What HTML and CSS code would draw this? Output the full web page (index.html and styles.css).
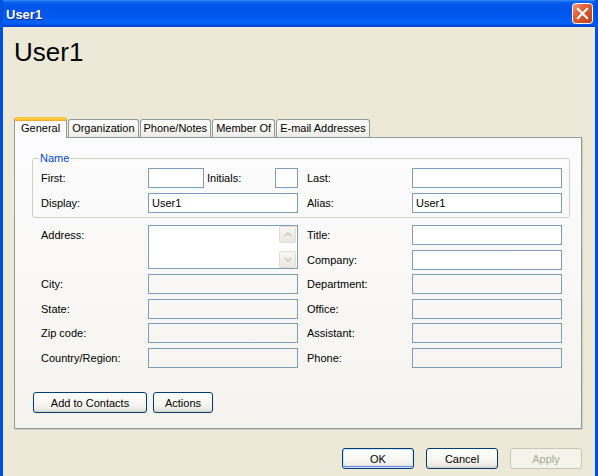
FILE: index.html
```html
<!DOCTYPE html>
<html lang="en">
<head>
    <meta charset="UTF-8">
    <meta name="viewport" content="width=device-width, initial-scale=1.0">
    <title>User1</title>
    <link rel="stylesheet" href="styles.css">
</head>
<body>
    <div class="window">
        <div class="titlebar">
            <span class="caption">User1</span>
            <button class="close" title="Close">
                <svg width="21" height="21" viewBox="0 0 21 21">
                    <defs>
                        <linearGradient id="red" x1="0" y1="0" x2="1" y2="1">
                            <stop offset="0" stop-color="#f0a080"/>
                            <stop offset="0.35" stop-color="#e2643c"/>
                            <stop offset="1" stop-color="#c23a12"/>
                        </linearGradient>
                    </defs>
                    <rect x="0.5" y="0.5" width="20" height="20" rx="3" fill="url(#red)" stroke="#fff"/>
                    <path d="M6 6 L15 15 M15 6 L6 15" stroke="#fff" stroke-width="2.2" stroke-linecap="square"/>
                </svg>
            </button>
        </div>

        <div class="client">
            <h1>User1</h1>

            <div class="tabs">
                <div class="tab active">General</div>
                <div class="tab">Organization</div>
                <div class="tab">Phone/Notes</div>
                <div class="tab">Member Of</div>
                <div class="tab">E-mail Addresses</div>
            </div>

            <div class="panel">
                <fieldset class="group">
                    <legend>Name</legend>
                    <div class="form-grid name-grid">
                        <label>First:</label>
                        <div class="first-cell">
                            <div class="textbox white short"></div>
                            <label class="inline">Initials:</label>
                            <div class="textbox white tiny"></div>
                        </div>
                        <label>Last:</label>
                        <div class="textbox white"></div>

                        <label>Display:</label>
                        <div class="textbox white">User1</div>
                        <label>Alias:</label>
                        <div class="textbox white">User1</div>
                    </div>
                </fieldset>

                <div class="form-grid details">
                    <label class="top">Address:</label>
                    <div class="textbox white multi">
                        <div class="vscroll">
                            <span class="arrow">
                                <svg width="8" height="5" viewBox="0 0 8 5"><path d="M0.5 4.5 L4 1 L7.5 4.5" fill="none" stroke="#c9c7ba" stroke-width="1.4"/></svg>
                            </span>
                            <span class="arrow">
                                <svg width="8" height="5" viewBox="0 0 8 5"><path d="M0.5 0.5 L4 4 L7.5 0.5" fill="none" stroke="#c9c7ba" stroke-width="1.4"/></svg>
                            </span>
                        </div>
                    </div>
                    <label>Title:</label>
                    <div class="textbox white"></div>
                    <label class="right-col">Company:</label>
                    <div class="textbox white"></div>

                    <label>City:</label>
                    <div class="textbox"></div>
                    <label>Department:</label>
                    <div class="textbox"></div>

                    <label>State:</label>
                    <div class="textbox"></div>
                    <label>Office:</label>
                    <div class="textbox"></div>

                    <label>Zip code:</label>
                    <div class="textbox"></div>
                    <label>Assistant:</label>
                    <div class="textbox"></div>

                    <label>Country/Region:</label>
                    <div class="textbox"></div>
                    <label>Phone:</label>
                    <div class="textbox"></div>
                </div>

                <div class="panel-buttons">
                    <button class="btn wide">Add to Contacts</button>
                    <button class="btn narrow">Actions</button>
                </div>
            </div>

            <div class="footer">
                <button class="btn dialog default">OK</button>
                <button class="btn dialog">Cancel</button>
                <button class="btn dialog" disabled>Apply</button>
            </div>
        </div>
    </div>
</body>
</html>
```

FILE: styles.css
```css
* {
    box-sizing: border-box;
}
body {
    margin: 0;
    font-family: "Liberation Sans", Arial, sans-serif;
    font-size: 11px;
    color: #000;
    background-color: #ece9d8;
}
.window {
    width: 598px;
    height: 476px;
    overflow: hidden;
    border-left: 3px solid #0050e0;
    border-right: 3px solid #0050e0;
    background-color: #ece9d8;
}
.titlebar {
    height: 27px;
    margin: 0 -3px;
    padding: 0 5px 0 6px;
    display: flex;
    align-items: center;
    justify-content: space-between;
    background: linear-gradient(to bottom, #3d8ff8 0, #0b60ec 2px, #0055ea 6px, #0057ee 16px, #0062f8 23px, #0048d6 26px, #003cc0 27px);
}
.caption {
    color: #fff;
    font-weight: bold;
    font-size: 13px;
    padding-top: 1px;
    text-shadow: 1px 1px 0 #0a2a8a;
}
.close {
    width: 21px;
    height: 21px;
    padding: 0;
    border: none;
    background: none;
    display: block;
}
.close svg {
    display: block;
}
.client {
    padding: 0 13px 0 11px;
}
h1 {
    margin: 10px 0 0 0;
    font-size: 26px;
    line-height: 30px;
    font-weight: normal;
    height: 30px;
}
.tabs {
    display: flex;
    align-items: flex-end;
    margin-top: 50px;
    height: 21px;
    margin-bottom: -1px;
    position: relative;
    z-index: 1;
}
.tab {
    height: 18px;
    margin-bottom: 1px;
    margin-right: 1px;
    padding: 2px 3px 0 3px;
    border: 1px solid #919b9c;
    border-bottom: none;
    border-radius: 3px 3px 0 0;
    background: linear-gradient(to bottom, #fff 0, #f7f7f4 50%, #ecebe6 100%);
    white-space: nowrap;
}
.tab.active {
    height: 21px;
    margin-bottom: 0;
    padding: 2px 6px 0 6px;
    border-top: 3px solid #ffc73c;
    box-shadow: inset 0 1px 0 #f5aa2c;
    background: #fcfcfe;
}
.panel {
    width: 568px;
    height: 292px;
    padding: 14px 0 0 0;
    border: 1px solid #919b9c;
    box-shadow: 1px 1px 0 #d0cebf;
    background: linear-gradient(to bottom, #fcfcfe 0, #f9f8f6 50%, #f4f3ee 100%);
}
.group {
    margin: 0 0 0 17px;
    width: 538px;
    padding: 3px 7px 4px 8px;
    border: 1px solid #d0d0bf;
    border-radius: 3px;
}
.group legend {
    padding: 0 1px;
    margin-left: -2px;
    color: #0046d5;
    line-height: 13px;
}
.form-grid {
    display: grid;
    grid-template-columns: 107px 159px 105px 150px;
    grid-auto-rows: 20px;
    align-items: center;
}
.name-grid {
    row-gap: 5px;
}
.details {
    margin: 7px 0 0 26px;
    row-gap: 4.5px;
}
label {
    white-space: nowrap;
}
label.top {
    align-self: start;
    padding-top: 4px;
}
label.right-col {
    grid-column: 3;
}
.textbox {
    width: 150px;
    height: 20px;
    padding: 0 3px;
    border: 1px solid #7f9db9;
    line-height: 18px;
    background: transparent;
}
.textbox.white {
    background: #fff;
}
.first-cell {
    display: flex;
    align-items: center;
    width: 150px;
}
.textbox.short {
    width: 56px;
}
.textbox.tiny {
    width: 23px;
    margin-left: auto;
}
.inline {
    margin-left: 3px;
}
.multi {
    grid-row: span 2;
    height: 44px;
    align-self: start;
    padding: 0;
    display: flex;
    justify-content: flex-end;
}
.vscroll {
    width: 18px;
    display: flex;
    flex-direction: column;
    justify-content: space-between;
    padding: 0 1px 0 0;
}
.arrow {
    height: 17px;
    display: flex;
    align-items: center;
    justify-content: center;
    border: 1px solid #e0ded3;
    border-radius: 2px;
    background: linear-gradient(to bottom, #f9f8f4, #e9e7de);
}
.arrow svg {
    display: block;
}
.panel-buttons {
    display: flex;
    gap: 6px;
    margin: 24.5px 0 0 18px;
}
.btn {
    height: 21px;
    padding: 0 6px;
    font-family: inherit;
    font-size: 11px;
    color: #000;
    border: 1px solid #003c74;
    border-radius: 3px;
    background: linear-gradient(to bottom, #fff 0, #f6f5f0 60%, #ecebe6 85%, #d6d0c5 100%);
}
.btn.wide {
    width: 114px;
}
.btn.narrow {
    width: 60px;
}
.btn.dialog {
    width: 72px;
}
.btn.default {
    box-shadow: inset 0 0 0 1px #cee7ff, inset 0 -1px 0 1px #6982ee;
}
.btn:disabled {
    color: #aca899;
    border-color: #c9c7ba;
    background: #f5f4ea;
}
.footer {
    display: flex;
    justify-content: flex-end;
    gap: 12px;
    margin-top: 19px;
}
```
